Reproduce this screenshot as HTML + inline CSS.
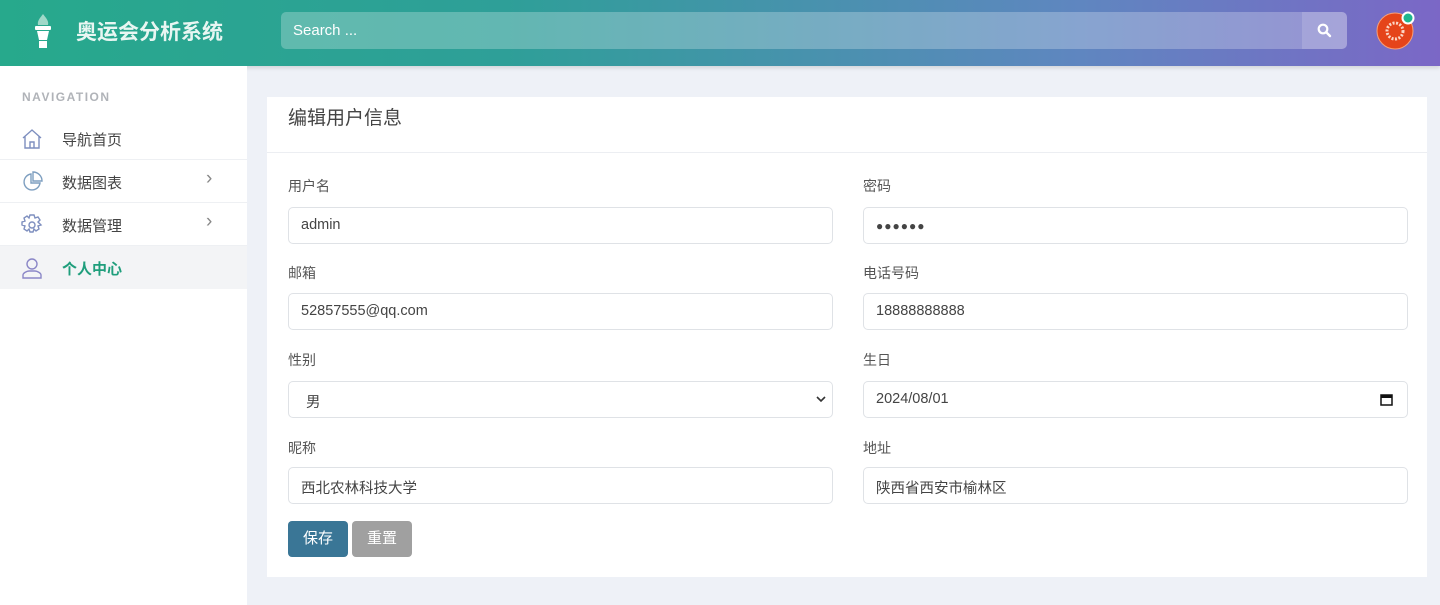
<!DOCTYPE html>
<html><head><meta charset="utf-8"><style>
*{box-sizing:border-box;margin:0;padding:0}
body{width:1440px;height:605px;overflow:hidden;background:#eef1f7;font-family:"Liberation Sans","Noto Sans CJK SC",sans-serif;position:relative}
.hdr{position:absolute;left:0;top:0;width:1440px;height:66px;background:linear-gradient(90deg,#27a98c 0%,#2e9f98 35%,#5f86c0 75%,#7b67c6 100%);box-shadow:0 2px 4px rgba(0,0,0,.12)}
.logo{position:absolute;left:76px;top:16px;color:#e8f6f2;font-size:21px;font-weight:bold;letter-spacing:0}
.search{position:absolute;left:281px;top:12px;width:1066px;height:37px;background:rgba(255,255,255,.25);border-radius:5px}
.search span{position:absolute;left:12px;top:10px;color:#fff;font-size:15px}
.sbtn{position:absolute;right:0;top:0;width:45px;height:37px;background:rgba(255,255,255,.15);border-radius:0 5px 5px 0}
.side{position:absolute;left:0;top:66px;width:247px;height:539px;background:#fff}
.nav{position:absolute;left:22px;top:90px;font-size:12px;color:#b0b3b8;letter-spacing:1.5px;font-weight:bold}
.item{position:absolute;left:0;width:247px;height:43px;border-bottom:1px solid #eef0f3;font-size:15px;color:#444}
.item span{position:absolute;left:62px;top:12px}
.item svg{position:absolute;left:21px;top:11px}
.item .ch{position:absolute;left:206px;top:8px;color:#888;font-size:19px}
.card{position:absolute;left:267px;top:97px;width:1160px;height:480px;background:#fff}
.ct{position:absolute;left:21px;top:6px;font-size:19px;color:#444}
.line{position:absolute;left:0;top:55px;width:1160px;height:1px;background:#eceef2}
.lb{position:absolute;font-size:14px;color:#555}
.in{position:absolute;height:37px;border:1px solid #dfe2e6;border-radius:5px;font-size:14.5px;color:#444;padding:9px 12px;width:545px}
.btn{position:absolute;top:424px;width:60px;height:36px;border-radius:4px;color:#fff;font-size:15px;text-align:center;line-height:36px}
</style></head><body>
<div class="hdr">
<svg style="position:absolute;left:32px;top:12px" width="22" height="38" viewBox="0 0 22 38"><path d="M11 2c-3 4-6 7-5 11h10c1-4-2-7-5-11z" fill="#9fd8c8"/><rect x="3" y="14" width="16" height="4" rx="1" fill="#fff"/><path d="M5 19h12l-2 9H7z" fill="#fff"/><rect x="7" y="29" width="8" height="7" fill="#fff"/></svg>
<div class="logo">奥运会分析系统</div>
<div class="search"><span>Search ...</span><div class="sbtn"><svg style="position:absolute;left:15px;top:11px" width="15" height="15" viewBox="0 0 15 15"><circle cx="6" cy="6" r="4.3" fill="none" stroke="#fff" stroke-width="2.2"/><path d="M9.3 9.3L13 13" stroke="#fff" stroke-width="2.4" stroke-linecap="round"/></svg></div></div>
<svg style="position:absolute;left:1376px;top:11px" width="40" height="40" viewBox="0 0 40 40"><circle cx="19" cy="20" r="18" fill="#e5441a" stroke="#f7a07a" stroke-width="1"/><circle cx="19" cy="20" r="8" fill="none" stroke="#fbd6c6" stroke-width="3" stroke-dasharray="2 1.5"/><circle cx="32" cy="7" r="5.5" fill="#1fb68e" stroke="#fff" stroke-width="2"/></svg>
</div>
<div class="side">
<div class="nav" style="top:24px">NAVIGATION</div>
<div class="item" style="top:51px"><svg width="22" height="22" viewBox="0 0 22 22" fill="none" stroke="#7e8fbf" stroke-width="1.4"><path d="M2 10L11 2l9 8M4 8v12h14V8M9 20v-6h4v6"/></svg><span>导航首页</span></div>
<div class="item" style="top:94px"><svg width="22" height="22" viewBox="0 0 22 22" fill="none" stroke="#7e9fc0" stroke-width="1.4"><path d="M10 3a8 8 0 1 0 9 9h-9z"/><path d="M12 1v9h9a9 9 0 0 0-9-9z"/></svg><span>数据图表</span><div class="ch">›</div></div>
<div class="item" style="top:137px"><svg width="22" height="22" viewBox="0 0 22 22" fill="none" stroke="#7e8fbf" stroke-width="1.4"><circle cx="11" cy="11" r="3"/><path d="M9 1h4l1 3 3-1 2 3-2 2 3 3-3 1 1 3-3 2-2-2-1 3H9l-1-3-2 2-3-2 1-3-3-1 0-3 3-1-1-3 3-2 2 2z"/></svg><span>数据管理</span><div class="ch">›</div></div>
<div class="item" style="top:180px;background:#f3f4f6;border:none"><svg width="22" height="22" viewBox="0 0 22 22" fill="none" stroke="#8b87c7" stroke-width="1.4"><circle cx="11" cy="7" r="5"/><path d="M2 21v-3c0-2 4-4 6-4h6c2 0 6 2 6 4v3z"/></svg><span style="color:#1f9e7c;font-weight:bold">个人中心</span></div>
</div>
<div class="card">
<div class="ct">编辑用户信息</div><div class="line"></div>
<div class="lb" style="left:21px;top:79px">用户名</div><div class="lb" style="left:596px;top:79px">密码</div>
<div class="in" style="left:21px;top:110px">admin</div><div class="in" style="left:596px;top:110px;letter-spacing:1px;font-size:12px;padding-top:11px">●●●●●●</div>
<div class="lb" style="left:21px;top:166px">邮箱</div><div class="lb" style="left:596px;top:166px">电话号码</div>
<div class="in" style="left:21px;top:196px">52857555@qq.com</div><div class="in" style="left:596px;top:196px">18888888888</div>
<div class="lb" style="left:21px;top:253px">性别</div><div class="lb" style="left:596px;top:253px">生日</div>
<div class="in" style="left:21px;top:284px;padding-left:17px">男<svg style="position:absolute;right:6px;top:14px" width="10" height="7" viewBox="0 0 10 7"><path d="M1 1l4 4 4-4" fill="none" stroke="#333" stroke-width="1.6"/></svg></div>
<div class="in" style="left:596px;top:284px">2024/08/01<svg style="position:absolute;right:14px;top:11px" width="13" height="13" viewBox="0 0 13 13"><rect x="1" y="2" width="11" height="10" fill="none" stroke="#111" stroke-width="1.5"/><rect x="1" y="2" width="11" height="3" fill="#111"/></svg></div>
<div class="lb" style="left:21px;top:341px">昵称</div><div class="lb" style="left:596px;top:341px">地址</div>
<div class="in" style="left:21px;top:370px">西北农林科技大学</div><div class="in" style="left:596px;top:370px">陕西省西安市榆林区</div>
<div class="btn" style="left:21px;background:#3a7696">保存</div>
<div class="btn" style="left:85px;background:#a0a0a0">重置</div>
</div>
</body></html>
